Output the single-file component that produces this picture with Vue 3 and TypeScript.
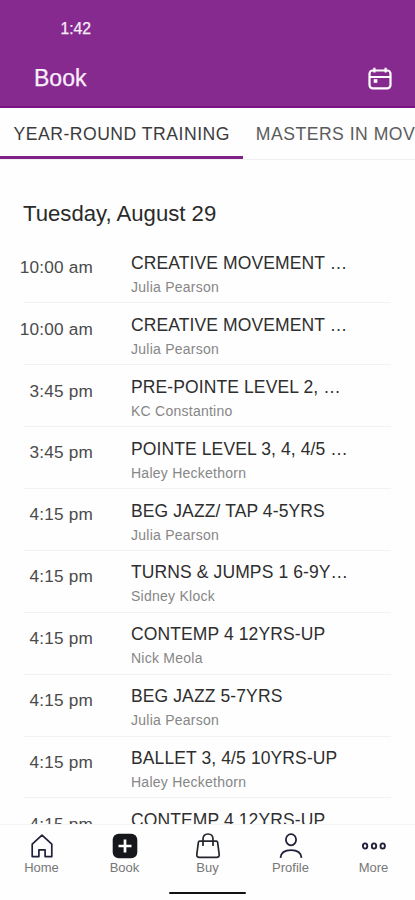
<script setup lang="ts">
interface ClassItem {
  time: string
  title: string
  teacher: string
}

const classes: ClassItem[] = [
  { time: '10:00 am', title: 'CREATIVE MOVEMENT …', teacher: 'Julia Pearson' },
  { time: '10:00 am', title: 'CREATIVE MOVEMENT …', teacher: 'Julia Pearson' },
  { time: '3:45 pm', title: 'PRE-POINTE LEVEL 2, …', teacher: 'KC Constantino' },
  { time: '3:45 pm', title: 'POINTE LEVEL 3, 4, 4/5 …', teacher: 'Haley Heckethorn' },
  { time: '4:15 pm', title: 'BEG JAZZ/ TAP 4-5YRS', teacher: 'Julia Pearson' },
  { time: '4:15 pm', title: 'TURNS & JUMPS 1 6-9Y…', teacher: 'Sidney Klock' },
  { time: '4:15 pm', title: 'CONTEMP 4 12YRS-UP', teacher: 'Nick Meola' },
  { time: '4:15 pm', title: 'BEG JAZZ 5-7YRS', teacher: 'Julia Pearson' },
  { time: '4:15 pm', title: 'BALLET 3, 4/5 10YRS-UP', teacher: 'Haley Heckethorn' },
  { time: '4:15 pm', title: 'CONTEMP 4 12YRS-UP', teacher: 'Nick Meola' },
]
</script>

<template>
  <div class="screen">
    <header class="header">
      <div class="status">1:42</div>
      <div class="bar">
        <h1>Book</h1>
        <svg class="calendar" width="26" height="24" viewBox="0 0 26 24" fill="none" stroke="#fff" stroke-width="2.2">
          <rect x="2.5" y="3.5" width="21" height="17.8" rx="3.2" />
          <path d="M2.5 10h21M7.4 .8v4.8M18.6 .8v4.8" />
          <path d="M6.7 14h3.6" stroke-width="3.6" />
        </svg>
      </div>
    </header>

    <nav class="tabs">
      <div class="tab active"><span>YEAR-ROUND TRAINING</span></div>
      <div class="tab"><span>MASTERS IN MOV</span></div>
    </nav>

    <main class="schedule">
      <h2>Tuesday, August 29</h2>
      <ul>
        <li v-for="(item, i) in classes" :key="i">
          <span class="time">{{ item.time }}</span>
          <div class="info">
            <div class="title">{{ item.title }}</div>
            <div class="teacher">{{ item.teacher }}</div>
          </div>
        </li>
      </ul>
    </main>

    <footer class="footer">
      <nav class="nav">
        <a class="item">
          <svg width="26" height="26" viewBox="0 0 26 26" fill="none" stroke="#20203a" stroke-width="1.7">
            <path d="M3.2 11.2 13 2.1l9.8 9.1v12.4h-6.7v-6.8H9.9v6.8H3.2z" stroke-linejoin="round" />
          </svg>
          <span>Home</span>
        </a>
        <a class="item">
          <svg width="26" height="26" viewBox="0 0 26 26">
            <rect x=".7" y=".7" width="24.6" height="24.6" rx="6" fill="#16171c" />
            <path d="M13 6.5v13M6.5 13h13" stroke="#fff" stroke-width="2.7" />
          </svg>
          <span>Book</span>
        </a>
        <a class="item">
          <svg width="26" height="26" viewBox="0 0 26 26" fill="none" stroke="#23272d" stroke-width="1.7">
            <path d="M4.6 8.2h16.8q1 0 1.2 1l1.6 12.2q.2 3-2.5 3H4.3q-2.7 0-2.5-3L3.4 9.2q.2-1 1.2-1z" />
            <path d="M8 13V6.2Q8 1 13 1t5 5.2V13" />
          </svg>
          <span>Buy</span>
        </a>
        <a class="item">
          <svg width="26" height="26" viewBox="0 0 26 26" fill="none" stroke="#20203a" stroke-width="1.8">
            <ellipse cx="13" cy="6.7" rx="5.1" ry="5.6" />
            <path d="M2.5 24.8c.5-5 4.5-7.6 10.5-7.6s10 2.6 10.5 7.6" />
          </svg>
          <span>Profile</span>
        </a>
        <a class="item">
          <svg width="26" height="26" viewBox="0 0 26 26" fill="none" stroke="#20203a" stroke-width="1.9">
            <ellipse cx="4.1" cy="13" rx="2.2" ry="2.6" />
            <ellipse cx="13" cy="13" rx="2.2" ry="2.6" />
            <ellipse cx="21.7" cy="13" rx="2.2" ry="2.6" />
          </svg>
          <span>More</span>
        </a>
      </nav>
      <div class="indicator"></div>
    </footer>
  </div>
</template>

<style>
body {
  margin: 0;
  overflow: hidden;
}
</style>

<style scoped>
.screen {
  display: flex;
  flex-direction: column;
  width: 415px;
  height: 900px;
  overflow: hidden;
  background: #fefefe;
  font-family: 'Liberation Sans', Arial, sans-serif;
  color: #2e2e2e;
}
h1, h2, ul {
  margin: 0;
  padding: 0;
  font-weight: 400;
  list-style: none;
}
.header {
  flex: none;
  box-sizing: border-box;
  height: 108px;
  background: #862a90;
  border-bottom: 2px solid #7a1485;
  color: #faeefb;
}
.status {
  height: 56px;
  padding-left: 60.5px;
  font-size: 15.7px;
  line-height: 57px;
  -webkit-text-stroke: 0.25px #faeefb;
}
.bar {
  display: flex;
  justify-content: space-between;
  align-items: center;
  height: 45px;
  padding: 0 22px 0 34px;
}
h1 {
  font-size: 23px;
  line-height: 45px;
  -webkit-text-stroke: 0.25px #faeefb;
}
.tabs {
  flex: none;
  display: flex;
  height: 52px;
  box-sizing: border-box;
  border-bottom: 1px solid #f1f1f1;
}
.tab {
  flex: none;
  box-sizing: border-box;
  height: 51px;
  padding: 0 0 0 12.8px;
  font-size: 17.6px;
  letter-spacing: 0.5px;
  line-height: 52px;
  color: #5c5c5c;
  white-space: nowrap;
}
.tab.active {
  width: 243px;
  border-bottom: 3px solid #812089;
  padding-left: 13.5px;
  color: #3c3c3c;
}
.schedule {
  flex: 1;
  min-height: 0;
  overflow: hidden;
}
h2 {
  padding: 40px 0 0 23px;
  font-size: 22.15px;
  line-height: 28px;
  color: #2a2a2a;
}
ul {
  padding: 13.4px 24px 0;
}
li {
  display: flex;
  box-sizing: border-box;
  height: 61.9px;
  border-bottom: 1px solid #f2f2f2;
}
.time {
  width: 69px;
  margin-right: 38px;
  display: flex;
  justify-content: flex-end;
  font-size: 17.2px;
  letter-spacing: 0.2px;
  line-height: 20px;
  padding-top: 15.4px;
  white-space: nowrap;
  color: #4a4a4a;
}
.title {
  padding-top: 10.6px;
  font-size: 17.5px;
  letter-spacing: 0.11px;
  line-height: 22px;
  white-space: nowrap;
}
.teacher {
  padding-top: 4px;
  font-size: 14px;
  line-height: 18px;
  letter-spacing: 0.25px;
  color: #868686;
}
.footer {
  flex: none;
  height: 76px;
  box-sizing: border-box;
  border-top: 1px solid #f4f4f4;
}
.nav {
  display: flex;
}
.item {
  width: 83px;
  display: flex;
  flex-direction: column;
  align-items: center;
  padding-top: 8px;
  color: #777;
  font-size: 13px;
  line-height: 18px;
}
.item svg {
  display: block;
}
.indicator {
  width: 77px;
  height: 2px;
  margin: 15px auto 0;
  border-radius: 1px;
  background: #111;
}
</style>
